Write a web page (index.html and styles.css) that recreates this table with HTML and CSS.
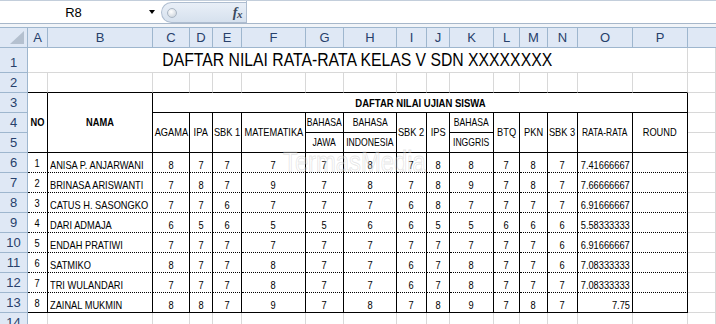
FILE: index.html
```html
<!DOCTYPE html>
<html>
<head>
<meta charset="utf-8">
<link rel="stylesheet" href="styles.css">
</head>
<body>
<div class="fbar">
  <div class="namebox"><span class="ref">R8</span><span class="arrow"></span></div>
  <div class="pill"><span class="knob"></span><span class="fx">f<span class="fxx">x</span></span></div>
  <div class="finput"></div>
</div>
<div class="gap"></div>
<div class="sheet">
  <!-- column headers -->
  <div class="hd corner"><svg width="14" height="13" viewBox="0 0 14 13"><polygon points="14,0 14,13 0,13" fill="#b4c0cf"/></svg></div>
  <div class="hd">A</div><div class="hd">B</div><div class="hd">C</div><div class="hd">D</div><div class="hd">E</div><div class="hd">F</div><div class="hd">G</div><div class="hd">H</div><div class="hd">I</div><div class="hd">J</div><div class="hd">K</div><div class="hd">L</div><div class="hd">M</div><div class="hd">N</div><div class="hd">O</div><div class="hd">P</div><div class="hd end"></div>

  <!-- row 1 -->
  <div class="rh">1</div>
  <div class="c title c16"><span class="t">DAFTAR NILAI RATA-RATA KELAS V SDN XXXXXXXX</span></div>
  <div class="c"></div>

  <!-- row 2 -->
  <div class="rh">2</div>
  <div class="c kb"></div><div class="c kb"></div><div class="c kb"></div><div class="c kb"></div><div class="c kb"></div><div class="c kb"></div><div class="c kb"></div><div class="c kb"></div><div class="c kb"></div><div class="c kb"></div><div class="c kb"></div><div class="c kb"></div><div class="c kb"></div><div class="c kb"></div><div class="c kb"></div><div class="c kb"></div>
  <div class="c"></div>

  <!-- row 3 -->
  <div class="rh">3</div>
  <div class="c h r3 kr kb bold"><span class="t">NO</span></div>
  <div class="c h r3 kr kb bold"><span class="t">NAMA</span></div>
  <div class="c h c14 kr kb bold big"><span class="t">DAFTAR NILAI UJIAN SISWA</span></div>
  <div class="c"></div>

  <!-- row 4 -->
  <div class="rh">4</div>
  <div class="c h r2 kr kb"><span class="t">AGAMA</span></div>
  <div class="c h r2 kr kb"><span class="t">IPA</span></div>
  <div class="c h r2 kr kb"><span class="t">SBK 1</span></div>
  <div class="c h r2 kr kb"><span class="t">MATEMATIKA</span></div>
  <div class="c h kr kb sm"><span class="t">BAHASA</span></div>
  <div class="c h kr kb sm"><span class="t">BAHASA</span></div>
  <div class="c h r2 kr kb"><span class="t">SBK 2</span></div>
  <div class="c h r2 kr kb"><span class="t">IPS</span></div>
  <div class="c h kr kb sm"><span class="t">BAHASA</span></div>
  <div class="c h r2 kr kb"><span class="t">BTQ</span></div>
  <div class="c h r2 kr kb"><span class="t">PKN</span></div>
  <div class="c h r2 kr kb"><span class="t">SBK 3</span></div>
  <div class="c h r2 kr kb xs"><span class="t">RATA-RATA</span></div>
  <div class="c h r2 kr kb"><span class="t">ROUND</span></div>
  <div class="c"></div>

  <!-- row 5 -->
  <div class="rh">5</div>
  <div class="c h kr kb sm"><span class="t">JAWA</span></div>
  <div class="c h kr kb sm"><span class="t">INDONESIA</span></div>
  <div class="c h kr kb sm"><span class="t">INGGRIS</span></div>
  <div class="c"></div>

  <!-- data rows -->
  <div class="rh">6</div>
  <div class="c kr dt no"><span class="t">1</span></div><div class="c kr dt nm"><span class="t">ANISA P. ANJARWANI</span></div>
  <div class="c kr dt n"><span class="t">8</span></div><div class="c kr dt n"><span class="t">7</span></div><div class="c kr dt n"><span class="t">7</span></div><div class="c kr dt n"><span class="t">7</span></div><div class="c kr dt n"><span class="t">7</span></div><div class="c kr dt n"><span class="t">8</span></div><div class="c kr dt n"><span class="t">7</span></div><div class="c kr dt n"><span class="t">8</span></div><div class="c kr dt n"><span class="t">8</span></div><div class="c kr dt n"><span class="t">7</span></div><div class="c kr dt n"><span class="t">8</span></div><div class="c kr dt n"><span class="t">7</span></div>
  <div class="c kr dt avg"><span class="t">7.41666667</span></div><div class="c kr dt"></div><div class="c"></div>

  <div class="rh">7</div>
  <div class="c kr dt no"><span class="t">2</span></div><div class="c kr dt nm"><span class="t">BRINASA ARISWANTI</span></div>
  <div class="c kr dt n"><span class="t">7</span></div><div class="c kr dt n"><span class="t">8</span></div><div class="c kr dt n"><span class="t">7</span></div><div class="c kr dt n"><span class="t">9</span></div><div class="c kr dt n"><span class="t">7</span></div><div class="c kr dt n"><span class="t">8</span></div><div class="c kr dt n"><span class="t">7</span></div><div class="c kr dt n"><span class="t">8</span></div><div class="c kr dt n"><span class="t">9</span></div><div class="c kr dt n"><span class="t">7</span></div><div class="c kr dt n"><span class="t">8</span></div><div class="c kr dt n"><span class="t">7</span></div>
  <div class="c kr dt avg"><span class="t">7.66666667</span></div><div class="c kr dt"></div><div class="c"></div>

  <div class="rh">8</div>
  <div class="c kr dt no"><span class="t">3</span></div><div class="c kr dt nm"><span class="t">CATUS H. SASONGKO</span></div>
  <div class="c kr dt n"><span class="t">7</span></div><div class="c kr dt n"><span class="t">7</span></div><div class="c kr dt n"><span class="t">6</span></div><div class="c kr dt n"><span class="t">7</span></div><div class="c kr dt n"><span class="t">7</span></div><div class="c kr dt n"><span class="t">7</span></div><div class="c kr dt n"><span class="t">6</span></div><div class="c kr dt n"><span class="t">8</span></div><div class="c kr dt n"><span class="t">7</span></div><div class="c kr dt n"><span class="t">7</span></div><div class="c kr dt n"><span class="t">7</span></div><div class="c kr dt n"><span class="t">7</span></div>
  <div class="c kr dt avg"><span class="t">6.91666667</span></div><div class="c kr dt"></div><div class="c"></div>

  <div class="rh">9</div>
  <div class="c kr dt no"><span class="t">4</span></div><div class="c kr dt nm"><span class="t">DARI ADMAJA</span></div>
  <div class="c kr dt n"><span class="t">6</span></div><div class="c kr dt n"><span class="t">5</span></div><div class="c kr dt n"><span class="t">6</span></div><div class="c kr dt n"><span class="t">5</span></div><div class="c kr dt n"><span class="t">5</span></div><div class="c kr dt n"><span class="t">6</span></div><div class="c kr dt n"><span class="t">6</span></div><div class="c kr dt n"><span class="t">5</span></div><div class="c kr dt n"><span class="t">5</span></div><div class="c kr dt n"><span class="t">6</span></div><div class="c kr dt n"><span class="t">6</span></div><div class="c kr dt n"><span class="t">6</span></div>
  <div class="c kr dt avg"><span class="t">5.58333333</span></div><div class="c kr dt"></div><div class="c"></div>

  <div class="rh">10</div>
  <div class="c kr dt no"><span class="t">5</span></div><div class="c kr dt nm"><span class="t">ENDAH PRATIWI</span></div>
  <div class="c kr dt n"><span class="t">7</span></div><div class="c kr dt n"><span class="t">7</span></div><div class="c kr dt n"><span class="t">7</span></div><div class="c kr dt n"><span class="t">7</span></div><div class="c kr dt n"><span class="t">7</span></div><div class="c kr dt n"><span class="t">7</span></div><div class="c kr dt n"><span class="t">7</span></div><div class="c kr dt n"><span class="t">7</span></div><div class="c kr dt n"><span class="t">7</span></div><div class="c kr dt n"><span class="t">7</span></div><div class="c kr dt n"><span class="t">7</span></div><div class="c kr dt n"><span class="t">6</span></div>
  <div class="c kr dt avg"><span class="t">6.91666667</span></div><div class="c kr dt"></div><div class="c"></div>

  <div class="rh">11</div>
  <div class="c kr dt no"><span class="t">6</span></div><div class="c kr dt nm"><span class="t">SATMIKO</span></div>
  <div class="c kr dt n"><span class="t">8</span></div><div class="c kr dt n"><span class="t">7</span></div><div class="c kr dt n"><span class="t">7</span></div><div class="c kr dt n"><span class="t">8</span></div><div class="c kr dt n"><span class="t">7</span></div><div class="c kr dt n"><span class="t">7</span></div><div class="c kr dt n"><span class="t">6</span></div><div class="c kr dt n"><span class="t">7</span></div><div class="c kr dt n"><span class="t">8</span></div><div class="c kr dt n"><span class="t">7</span></div><div class="c kr dt n"><span class="t">7</span></div><div class="c kr dt n"><span class="t">6</span></div>
  <div class="c kr dt avg"><span class="t">7.08333333</span></div><div class="c kr dt"></div><div class="c"></div>

  <div class="rh">12</div>
  <div class="c kr dt no"><span class="t">7</span></div><div class="c kr dt nm"><span class="t">TRI WULANDARI</span></div>
  <div class="c kr dt n"><span class="t">7</span></div><div class="c kr dt n"><span class="t">7</span></div><div class="c kr dt n"><span class="t">7</span></div><div class="c kr dt n"><span class="t">8</span></div><div class="c kr dt n"><span class="t">7</span></div><div class="c kr dt n"><span class="t">7</span></div><div class="c kr dt n"><span class="t">6</span></div><div class="c kr dt n"><span class="t">7</span></div><div class="c kr dt n"><span class="t">8</span></div><div class="c kr dt n"><span class="t">7</span></div><div class="c kr dt n"><span class="t">7</span></div><div class="c kr dt n"><span class="t">7</span></div>
  <div class="c kr dt avg"><span class="t">7.08333333</span></div><div class="c kr dt"></div><div class="c"></div>

  <div class="rh">13</div>
  <div class="c kr kb no"><span class="t">8</span></div><div class="c kr kb nm"><span class="t">ZAINAL MUKMIN</span></div>
  <div class="c kr kb n"><span class="t">8</span></div><div class="c kr kb n"><span class="t">8</span></div><div class="c kr kb n"><span class="t">7</span></div><div class="c kr kb n"><span class="t">9</span></div><div class="c kr kb n"><span class="t">7</span></div><div class="c kr kb n"><span class="t">8</span></div><div class="c kr kb n"><span class="t">7</span></div><div class="c kr kb n"><span class="t">8</span></div><div class="c kr kb n"><span class="t">9</span></div><div class="c kr kb n"><span class="t">7</span></div><div class="c kr kb n"><span class="t">8</span></div><div class="c kr kb n"><span class="t">7</span></div>
  <div class="c kr kb avg"><span class="t">7.75</span></div><div class="c kr kb"></div><div class="c"></div>

  <!-- row 14 -->
  <div class="rh">14</div>
  <div class="c"></div><div class="c"></div><div class="c"></div><div class="c"></div><div class="c"></div><div class="c"></div><div class="c"></div><div class="c"></div><div class="c"></div><div class="c"></div><div class="c"></div><div class="c"></div><div class="c"></div><div class="c"></div><div class="c"></div><div class="c"></div><div class="c"></div>
</div>
<div class="watermark">TermasMedia</div>
</body>
</html>
```

FILE: styles.css
```css
* { box-sizing: border-box; }
html, body { margin: 0; padding: 0; }
body {
  width: 716px;
  height: 324px;
  overflow: hidden;
  position: relative;
  background: #fff;
  font-family: "Liberation Sans", Arial, sans-serif;
  color: #000;
}

/* formula bar */
.fbar {
  height: 24px;
  display: flex;
  background: #fff;
  border-top: 1px solid #c3cedb;
  border-bottom: 1px solid #a7b7ca;
}
.namebox {
  width: 161px;
  display: flex;
  align-items: center;
}
.namebox .ref {
  width: 147px;
  text-align: center;
  font-size: 13px;
  color: #000;
}
.namebox .arrow {
  width: 0;
  height: 0;
  margin-left: 2px;
  border-left: 3.5px solid transparent;
  border-right: 3.5px solid transparent;
  border-top: 4px solid #000;
}
.pill {
  width: 85px;
  margin-top: 1px;
  height: 21px;
  display: flex;
  align-items: center;
  justify-content: space-between;
  padding: 0 4px 0 5px;
  border: 1px solid #aebdd0;
  border-right: none;
  border-radius: 11px 0 0 11px;
  background: linear-gradient(#e9eff7, #d6e1ee);
}
.knob {
  width: 10px;
  height: 10px;
  border-radius: 50%;
  border: 1px solid #aab6c4;
  background: radial-gradient(circle at 40% 35%, #ffffff, #c3ccd6);
}
.fx {
  font-family: "Liberation Serif", "Times New Roman", serif;
  font-style: italic;
  font-weight: bold;
  font-size: 14px;
  color: #3a4a5e;
  letter-spacing: -0.5px;
}
.fxx { font-size: 11px; position: relative; top: 1px; }
.finput {
  flex: 1;
  background: #fff;
  border-left: 1px solid #aebdd0;
}
.gap {
  height: 4px;
  background: #f1f4f8;
  border-bottom: 1px solid #9eb6ce;
}

/* sheet grid */
.sheet {
  display: grid;
  grid-template-columns: 28px 20px 105px 37px 23px 29px 64px 38px 53px 30px 23px 44px 26px 28px 30px 55px 55px 1fr;
  grid-template-rows: 20px 25px 20px repeat(11, 20px) 20px;
}
.hd {
  background: #dfe8f5;
  border-right: 1px solid #9eb6ce;
  border-bottom: 1px solid #9eb6ce;
  display: flex;
  align-items: center;
  justify-content: center;
  font-size: 13px;
  color: #27406b;
}
.hd.end { border-right: none; }
.corner { justify-content: flex-end; align-items: flex-end; padding: 0 3px 3px 0; }
.corner svg { display: block; }
.rh {
  background: #dfe8f5;
  border-right: 1px solid #9eb6ce;
  border-bottom: 1px solid #9eb6ce;
  display: flex;
  align-items: flex-end;
  justify-content: center;
  padding-bottom: 1px;
  font-size: 13px;
  line-height: 17px;
  color: #27406b;
}
.c {
  border-right: 1px solid #d8d8d8;
  border-bottom: 1px solid #d8d8d8;
  display: flex;
  align-items: flex-end;
  font-size: 11.3px;
  line-height: 13px;
  white-space: nowrap;
}
.t {
  display: inline-block;
  flex: none;
  transform: scaleX(0.82);
  transform-origin: center bottom;
}
.c16 { grid-column: span 16; }
.c14 { grid-column: span 14; }
.r3 { grid-row: span 3; }
.r2 { grid-row: span 2; }
.kr { border-right-color: #000; }
.kb { border-bottom-color: #000; }
.dt { border-bottom: 1px dotted #000; }

.title {
  justify-content: center;
  font-size: 18.7px;
  line-height: 22px;
  padding-bottom: 1px;
}
.title .t { transform: scaleX(0.843); }
.h {
  align-items: center;
  justify-content: center;
}
.bold { font-weight: bold; }
.big { font-size: 11.6px; }
.sm { font-size: 10.5px; }
.xs { font-size: 10.3px; }

.no { justify-content: center; padding-bottom: 2px; }
.nm { padding-left: 2px; }
.nm .t { transform-origin: left bottom; }
.n { justify-content: center; }
.avg { justify-content: flex-end; padding-right: 2px; }
.avg .t { transform-origin: right bottom; }

.watermark {
  position: absolute;
  left: 283px;
  top: 148px;
  font-size: 29px;
  line-height: 29px;
  color: rgba(255, 255, 255, 0.3);
  -webkit-text-stroke: 1px rgba(170, 170, 170, 0.3);
  transform: scaleX(0.82);
  transform-origin: left top;
  pointer-events: none;
}
```
